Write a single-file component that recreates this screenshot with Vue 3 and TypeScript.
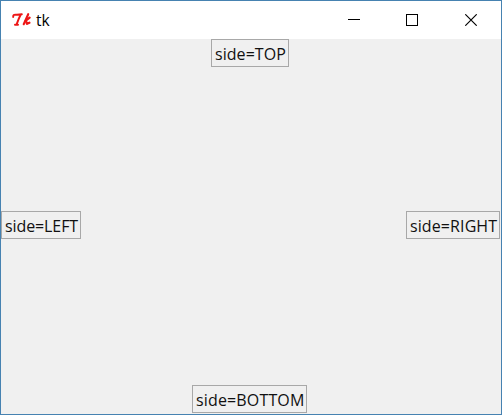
<script setup lang="ts">
interface PackButton {
  side: string
  label: string
}

const buttons: PackButton[] = [
  { side: 'top', label: 'side=TOP' },
  { side: 'left', label: 'side=LEFT' },
  { side: 'right', label: 'side=RIGHT' },
  { side: 'bottom', label: 'side=BOTTOM' },
]
</script>

<template>
  <div class="window">
    <header class="titlebar">
      <svg class="logo" width="20" height="16" viewBox="0 0 20 16" fill="none" stroke="#ed1616" stroke-linecap="round" stroke-linejoin="round">
        <path d="M1.2 4.9C1 2.4 2.8 2.6 4.8 2.7C7 2.7 8.5 2.5 9.8 2.2" stroke-width="2" />
        <path d="M8.3 3.4C6.8 6 5.8 9 4.7 12.2M3 12.8H6" stroke-width="2" />
        <path d="M16.2 2.2L11.7 12.2" stroke-width="2.1" />
        <path d="M17.6 5.6L13.8 8.6L15 11.8L17.4 10.7" stroke-width="2.3" />
      </svg>
      <span class="title">tk</span>
      <nav class="controls">
        <svg width="12" height="12" viewBox="0 0 12 12" shape-rendering="crispEdges"><path d="M0 5.5H12" stroke="#000" /></svg>
        <svg width="12" height="12" viewBox="0 0 12 12" shape-rendering="crispEdges"><rect x=".5" y=".5" width="11" height="11" fill="none" stroke="#000" /></svg>
        <svg class="close" width="12" height="12" viewBox="0 0 12 12"><path d="M.3.3L11.7 11.7M11.7.3L.3 11.7" fill="none" stroke="#000" stroke-width="1.15" /></svg>
      </nav>
    </header>
    <main class="client">
      <button v-for="b in buttons" :key="b.side" class="btn" :class="b.side">{{ b.label }}</button>
    </main>
  </div>
</template>

<style>
body { margin: 0; overflow: hidden; }
</style>

<style scoped>
.window {
  box-sizing: border-box;
  width: 502px;
  height: 415px;
  display: flex;
  flex-direction: column;
  border: 1px solid #4682b1;
  background: #f0f0f0;
  font-family: "Open Sans", "Noto Sans", sans-serif;
}
.titlebar {
  box-sizing: border-box;
  height: 38px;
  flex: none;
  display: flex;
  align-items: center;
  padding: 0 24px 0 11px;
  background: #fff;
}
.logo { flex: none; }
.title {
  margin: -1px 0 0 4px;
  font-size: 15.5px;
  line-height: 20px;
  color: #000;
}
.controls {
  display: flex;
  gap: 46px;
  margin-left: auto;
}
.controls svg { display: block; }
.controls .close { margin-left: 1px; }
.client {
  flex: 1;
  display: grid;
  grid-template: 28px 1fr 28px / 1fr 1fr;
  align-items: center;
  padding-bottom: 1px;
}
.btn {
  box-sizing: border-box;
  height: 28px;
  padding: 2px 0 0 3px;
  border: 1px solid #a8a8a8;
  background: #f0f0f0;
  color: #111;
  font: 16px/24px "Open Sans", "Noto Sans", sans-serif;
  text-align: left;
  white-space: nowrap;
}
.top, .bottom { grid-column: 1 / 3; justify-self: center; }
.top { width: 78px; margin-right: 2px; letter-spacing: 0.05px; }
.left { width: 80px; margin-bottom: 2px; letter-spacing: -0.1px; }
.right { width: 94px; margin: 0 1px 2px 0; justify-self: end; letter-spacing: 0.1px; }
.bottom { width: 115px; margin-right: 3px; letter-spacing: 0.15px; }
</style>
